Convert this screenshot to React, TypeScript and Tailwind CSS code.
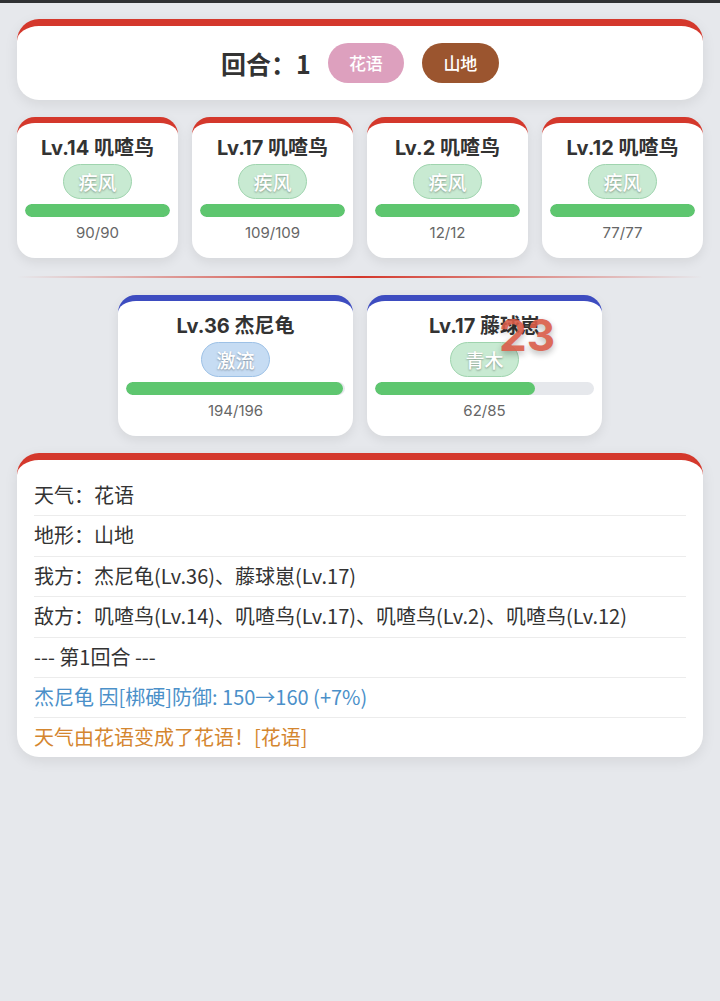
import React from "react";

const font = { fontFamily: '"Noto Sans CJK SC", "Noto Sans", sans-serif' };
const interFont = { fontFamily: 'Inter, "Noto Sans CJK SC", sans-serif' };

type Mon = { name: string; ability: string; hp: number; max: number; kind: "green" | "blue" };

const enemies: Mon[] = [
  { name: "Lv.14 叽喳鸟", ability: "疾风", hp: 90, max: 90, kind: "green" },
  { name: "Lv.17 叽喳鸟", ability: "疾风", hp: 109, max: 109, kind: "green" },
  { name: "Lv.2 叽喳鸟", ability: "疾风", hp: 12, max: 12, kind: "green" },
  { name: "Lv.12 叽喳鸟", ability: "疾风", hp: 77, max: 77, kind: "green" },
];

const allies: Mon[] = [
  { name: "Lv.36 杰尼龟", ability: "激流", hp: 194, max: 196, kind: "blue" },
  { name: "Lv.17 藤球崽", ability: "青木", hp: 62, max: 85, kind: "green" },
];

function Card({ m, side, dmg }: { m: Mon; side: "enemy" | "ally"; dmg?: string }) {
  const pct = Math.round((m.hp / m.max) * 1000) / 10;
  return (
    <div
      className={
        "relative flex h-[141px] flex-col items-center rounded-[18px] border-t-[6px] bg-white px-2 pt-[13px] shadow-[0_4px_12px_rgba(0,0,0,0.08)] " +
        (side === "enemy" ? "border-[#d4382c]" : "border-[#3d4cc0]")
      }
    >
      <div className="text-[20px] font-bold leading-[24px] text-[#333]" style={interFont}>
        {m.name}
      </div>
      <div
        className={
          "mt-[4px] flex h-[35px] items-center rounded-full border-[1.5px] px-[14px] text-[19px] font-medium leading-none text-white [text-shadow:0_1px_2px_rgba(0,0,0,0.35)] " +
          (m.kind === "green" ? "border-[#9fd4ae] bg-[#c8ead2]" : "border-[#9dc1e6] bg-[#c6dcf3]")
        }
      >
        {m.ability}
      </div>
      <div className="mt-[5px] h-[13px] w-full overflow-hidden rounded-full bg-[#e6e8ec]">
        <div className="h-full rounded-full bg-[#5ec66f]" style={{ width: pct + "%" }} />
      </div>
      <div className="mt-[6px] text-[15px] leading-[20px] text-[#666]" style={interFont}>
        {m.hp}/{m.max}
      </div>
      {dmg && (
        <div
          className="absolute left-[132px] top-[12px] text-[44px] font-bold leading-none text-[#d95c48] opacity-90 [text-shadow:0_3px_6px_rgba(0,0,0,0.3)]"
          style={interFont}
        >
          {dmg}
        </div>
      )}
    </div>
  );
}

const logs: { t: string; c: string }[] = [
  { t: "天气：花语", c: "text-[#333]" },
  { t: "地形：山地", c: "text-[#333]" },
  { t: "我方：杰尼龟(Lv.36)、藤球崽(Lv.17)", c: "text-[#333]" },
  { t: "敌方：叽喳鸟(Lv.14)、叽喳鸟(Lv.17)、叽喳鸟(Lv.2)、叽喳鸟(Lv.12)", c: "text-[#333]" },
  { t: "--- 第1回合 ---", c: "text-[#333]" },
  { t: "杰尼龟 因[梆硬]防御: 150→160 (+7%)", c: "text-[#4b90c9]" },
  { t: "天气由花语变成了花语！[花语]", c: "text-[#d4862f]" },
];

export default function App() {
  return (
    <div className="min-h-[1001px] bg-[#e6e8ec]" style={font}>
      <div className="h-[3px] bg-[#2f3133]" />
      <div className="px-[17px] pt-[16px]">
        <div className="flex h-[81px] items-center justify-center rounded-[22px] border-t-[7px] border-[#d4382c] bg-white shadow-[0_4px_14px_rgba(0,0,0,0.08)]">
          <div className="flex items-center">
            <span className="text-[25px] font-bold leading-none text-[#333]">回合：1</span>
            <span className="ml-[17px] flex h-[40px] w-[76px] items-center justify-center rounded-full bg-[#dda0be] text-[17px] font-medium text-white">
              花语
            </span>
            <span className="ml-[18px] flex h-[40px] w-[77px] items-center justify-center rounded-full bg-[#9b552f] text-[17px] font-medium text-white">
              山地
            </span>
          </div>
        </div>

        <div className="mt-[17px] grid grid-cols-4 gap-[14px]">
          {enemies.map((m, i) => (
            <Card key={i} m={m} side="enemy" />
          ))}
        </div>

        <div className="mt-[18px] h-[2px] bg-gradient-to-r from-transparent via-[#d4382c] to-transparent" />

        <div className="mt-[17px] flex justify-center gap-[14px]">
          {allies.map((m, i) => (
            <div key={i} className="w-[235px]">
              <Card m={m} side="ally" dmg={i === 1 ? "23" : undefined} />
            </div>
          ))}
        </div>

        <div className="mt-[17px] rounded-[22px] border-t-[7px] border-[#d4382c] bg-white px-[17px] pt-[16px] shadow-[0_4px_14px_rgba(0,0,0,0.08)]">
          {logs.map((l, i) => (
            <div
              key={i}
              className={
                "pt-[7px] text-[20px] leading-[24px] " +
                l.c +
                (i < logs.length - 1 ? " border-b border-[#ececec] pb-[8.4px]" : " pb-[8px]")
              }
            >
              {l.t}
            </div>
          ))}
        </div>
      </div>
    </div>
  );
}
